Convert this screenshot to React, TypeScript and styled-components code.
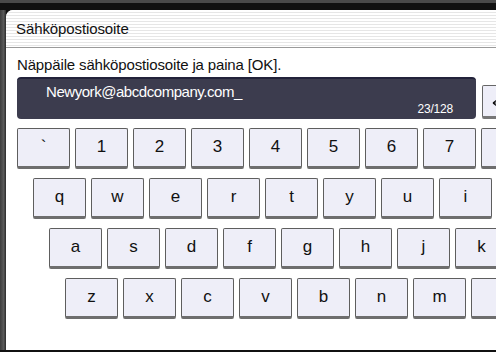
import React from "react";
import styled, { createGlobalStyle } from "styled-components";

const Global = createGlobalStyle`
  html, body { margin: 0; padding: 0; }
  body { width: 496px; height: 352px; overflow: hidden; background: #2a2a2a; }
`;

const Screen = styled.div`
  width: 496px;
  height: 352px;
  display: flex;
  flex-direction: column;
  background: #3a3a3a;
  overflow: hidden;
  font-family: "Liberation Sans", Arial, sans-serif;
`;

const TopBar = styled.div`
  height: 10px;
  flex: none;
  background: linear-gradient(#4a4a4a 0, #4a4a4a 3px, #111 3px, #111 10px);
`;

const Frame = styled.div`
  flex: 1;
  display: flex;
  background: #111;
  padding-bottom: 2px;
`;

const LeftRail = styled.div`
  width: 6px;
  flex: none;
  background: linear-gradient(90deg, #3c3c3c, #5a5a5a 60%, #2a2a2a);
`;

const Window = styled.div`
  flex: 1;
  min-width: 0;
  background: #fff;
  border-top-left-radius: 7px;
  display: flex;
  flex-direction: column;
  overflow: hidden;
`;

const TitleBar = styled.div`
  height: 38px;
  flex: none;
  box-sizing: border-box;
  border-bottom: 1px solid #9a9a9a;
  background: repeating-linear-gradient(#ffffff 0, #ffffff 2px, #e6e6e6 2px, #e6e6e6 3px);
  display: flex;
  align-items: center;
  padding-left: 10px;
  font-size: 15px;
  letter-spacing: -0.1px;
  color: #111;
`;

const Content = styled.div`
  padding: 7px 0 0 11px;
  display: flex;
  flex-direction: column;
`;

const Prompt = styled.div`
  font-size: 15px;
  letter-spacing: -0.15px;
  color: #111;
  height: 20px;
  line-height: 20px;
  white-space: nowrap;
`;

const InputRow = styled.div`
  display: flex;
  align-items: flex-end;
  gap: 6px;
  margin-top: 2px;
`;

const InputBox = styled.div`
  width: 459px;
  height: 42px;
  box-sizing: border-box;
  flex: none;
  background: #3c3c4e;
  border-top: 2px solid #22223a;
  border-radius: 4px;
  position: relative;
  color: #fff;
`;

const InputText = styled.div`
  padding: 3px 0 0 29px;
  font-size: 15px;
  line-height: 20px;
  letter-spacing: -0.45px;
  white-space: nowrap;
`;

const Counter = styled.div`
  position: absolute;
  right: 23px;
  bottom: 3px;
  font-size: 12px;
  letter-spacing: -0.2px;
  color: #fff;
`;

const SideButton = styled.div`
  width: 53px;
  height: 34px;
  flex: none;
  box-sizing: border-box;
  background: #eeeef8;
  border: 1px solid #666;
  border-bottom: 3px solid #777;
  border-radius: 2px;
  padding: 13px 0 0 9px;
  color: #111;
  display: flex;
  align-items: flex-start;
`;

const Keyboard = styled.div`
  display: flex;
  flex-direction: column;
  gap: 9px;
  margin-top: 9px;
`;

const KeyRow = styled.div<{ $indent: number }>`
  display: flex;
  gap: 5px;
  padding-left: ${(p) => p.$indent}px;
`;

const Key = styled.div`
  width: 53px;
  height: 41px;
  flex: none;
  box-sizing: border-box;
  background: #eeeef8;
  border: 1px solid #5e5e5e;
  border-bottom: 3px solid #6e6e6e;
  border-radius: 2px;
  display: flex;
  align-items: center;
  justify-content: center;
  font-size: 17px;
  color: #111;
  padding-bottom: 1px;
`;

const rows: { indent: number; keys: string[] }[] = [
  { indent: 0, keys: ["`", "1", "2", "3", "4", "5", "6", "7", ""] },
  { indent: 16, keys: ["q", "w", "e", "r", "t", "y", "u", "i", ""] },
  { indent: 32, keys: ["a", "s", "d", "f", "g", "h", "j", "k"] },
  { indent: 48, keys: ["z", "x", "c", "v", "b", "n", "m", ""] },
];

export default function App() {
  return (
    <>
      <Global />
      <Screen>
        <TopBar />
        <Frame>
          <LeftRail />
          <Window>
            <TitleBar>Sähköpostiosoite</TitleBar>
            <Content>
              <Prompt>Näppäile sähköpostiosoite ja paina [OK].</Prompt>
              <InputRow>
                <InputBox>
                  <InputText>Newyork@abcdcompany.com_</InputText>
                  <Counter>23/128</Counter>
                </InputBox>
                <SideButton>
                  <svg width="20" height="8" viewBox="0 0 20 8">
                    <path d="M1 4 H19 M1 4 L5 1 M1 4 L5 7" stroke="#111" strokeWidth="1.2" fill="none" />
                  </svg>
                </SideButton>
              </InputRow>
              <Keyboard>
                {rows.map((r, i) => (
                  <KeyRow key={i} $indent={r.indent}>
                    {r.keys.map((k, j) => (
                      <Key key={j}>{k}</Key>
                    ))}
                  </KeyRow>
                ))}
              </Keyboard>
            </Content>
          </Window>
        </Frame>
      </Screen>
    </>
  );
}
